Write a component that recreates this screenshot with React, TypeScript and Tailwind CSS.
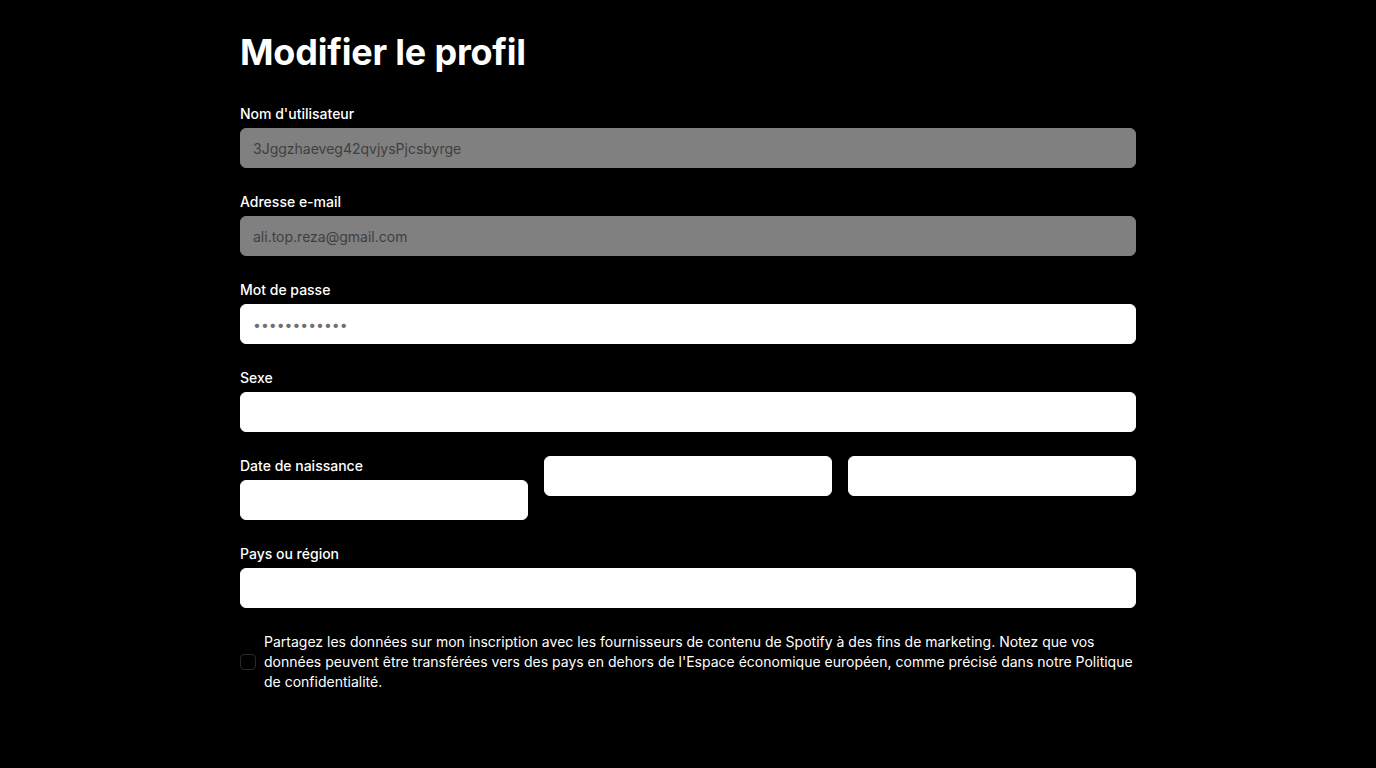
import React from "react";

const font = { fontFamily: "Inter, 'Noto Sans', sans-serif" };

const Field = ({
  label,
  value,
  disabled,
  type = "text",
}: {
  label?: string;
  value?: string;
  disabled?: boolean;
  type?: string;
}) => (
  <div className="flex flex-col">
    {label && <label className="text-sm leading-5 font-medium text-white mb-1">{label}</label>}
    <input
      type={type}
      defaultValue={value}
      disabled={disabled}
      className={
        "h-10 w-full rounded-md border px-3 text-sm outline-none " +
        (disabled
          ? "bg-[#808080] border-[#808080] text-[#3f3f3f]"
          : "bg-white border-white text-[#707070]")
      }
    />
  </div>
);

export default function App() {
  return (
    <div className="min-h-[768px] bg-black text-white" style={font}>
      <div className="mx-auto w-[896px] pt-8">
        <h1 className="text-4xl leading-10 font-bold tracking-[-0.2px] mb-8">Modifier le profil</h1>
        <form className="flex flex-col gap-6">
          <Field label="Nom d'utilisateur" value="3Jggzhaeveg42qvjysPjcsbyrge" disabled />
          <Field label="Adresse e-mail" value="ali.top.reza@gmail.com" disabled />
          <Field label="Mot de passe" value="aaaaaaaaaaaa" type="password" />
          <Field label="Sexe" />
          <div className="grid grid-cols-3 gap-4 items-start">
            <Field label="Date de naissance" />
            <Field />
            <Field />
          </div>
          <Field label="Pays ou région" />
          <label className="flex items-center gap-2">
            <input
              type="checkbox"
              className="h-4 w-4 shrink-0 appearance-none rounded-[4px] border border-[#2a2a2a] bg-black"
            />
            <span className="text-sm leading-5 text-white">
              Partagez les données sur mon inscription avec les fournisseurs de contenu de Spotify à des fins de marketing. Notez que vos données peuvent être transférées vers des pays en dehors de l'Espace économique européen, comme précisé dans notre Politique de confidentialité.
            </span>
          </label>
        </form>
      </div>
    </div>
  );
}
